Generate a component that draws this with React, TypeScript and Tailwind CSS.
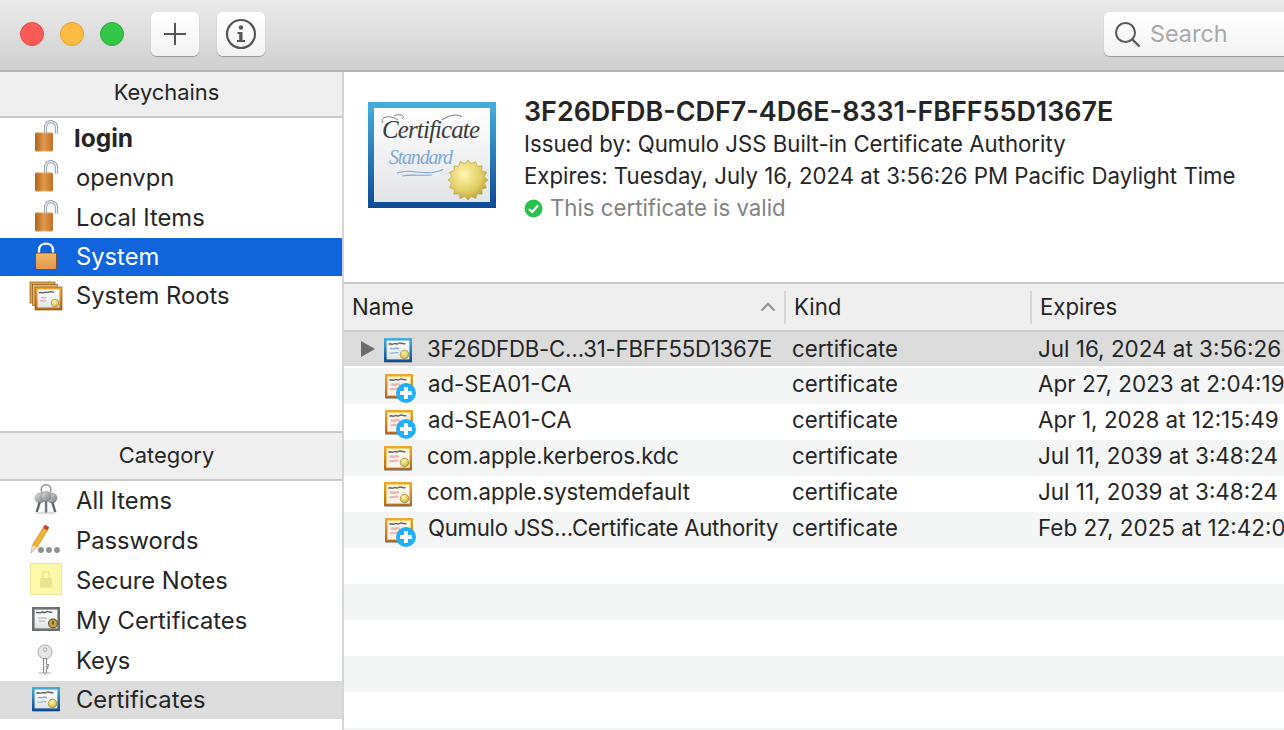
import React from 'react';

// Shared gradients for the little keychain drawings
const Defs = () => (
  <svg width="0" height="0" className="absolute">
    <defs>
      <linearGradient id="brass" x1="0" y1="0" x2="1" y2="0">
        <stop offset="0" stopColor="#b8691f" />
        <stop offset="0.5" stopColor="#f0ab58" />
        <stop offset="1" stopColor="#c97a2e" />
      </linearGradient>
      <linearGradient id="closedBrass" x1="0" y1="0" x2="0" y2="1">
        <stop offset="0" stopColor="#fac674" />
        <stop offset="1" stopColor="#e99a4e" />
      </linearGradient>
      <linearGradient id="blueFrame" x1="0" y1="0" x2="0" y2="1">
        <stop offset="0" stopColor="#45b0dc" />
        <stop offset="1" stopColor="#0e4a96" />
      </linearGradient>
      <linearGradient id="goldFrame" x1="0" y1="0" x2="0" y2="1">
        <stop offset="0" stopColor="#eeaa2e" />
        <stop offset="1" stopColor="#b5671a" />
      </linearGradient>
      <linearGradient id="paper" x1="0" y1="0" x2="0" y2="1">
        <stop offset="0" stopColor="#ffffff" />
        <stop offset="1" stopColor="#e2e4e6" />
      </linearGradient>
      <radialGradient id="seal" cx="0.4" cy="0.35" r="0.75">
        <stop offset="0" stopColor="#fff6b0" />
        <stop offset="0.6" stopColor="#e0cc60" />
        <stop offset="1" stopColor="#a8902c" />
      </radialGradient>
      <linearGradient id="steel" x1="0" y1="0" x2="1" y2="1">
        <stop offset="0" stopColor="#e6e8ea" />
        <stop offset="1" stopColor="#70747a" />
      </linearGradient>
    </defs>
  </svg>
);

const Bands = ({ x, y, w, h, color }: { x: number; y: number; w: number; h: number; color: string }) => (
  <>
    {Array.from({ length: Math.floor(h / 2) }).map((_, i) => (
      <line key={i} x1={x} x2={x + w} y1={y + 1 + i * 2} y2={y + 1 + i * 2} stroke={color} strokeWidth="0.6" opacity="0.55" />
    ))}
  </>
);

const OpenLock = () => (
  <svg width="36" height="36" viewBox="0 0 36 36">
    <path d="M17.500 13V8c0-8.500 11-8.500 11 0v5.500" fill="none" stroke="#8d9aa6" strokeWidth="3.200" />
    <path d="M17.500 13V8c0-8.500 11-8.500 11 0v5.500" fill="none" stroke="#f0f4f8" strokeWidth="1.400" />
    <rect x="7" y="12.500" width="18" height="19" rx="1.500" fill="url(#brass)" />
    <Bands x={7} y={14} w={18} h={16} color="#8e4b12" />
  </svg>
);

const ClosedLock = () => (
  <svg width="36" height="36" viewBox="0 0 36 36">
    <path d="M11 15V11c0-8.500 14-8.500 14 0v4" fill="none" stroke="#f3f6fa" strokeWidth="2.400" />
    <rect x="7.500" y="14" width="21" height="16.500" rx="1.500" fill="url(#closedBrass)" stroke="#7c3e10" strokeWidth="0.8" />
    <Bands x={8} y={15} w={20} h={15} color="#c9792f" />
  </svg>
);

const sealPoints = (cx: number, cy: number, r: number, inner: number, n: number) =>
  Array.from({ length: n * 2 })
    .map((_, i) => {
      const a = (Math.PI * i) / n;
      const d = i % 2 ? inner : r;
      return `${(cx + d * Math.cos(a)).toFixed(2)},${(cy + d * Math.sin(a)).toFixed(2)}`;
    })
    .join(' ');

// 28x24 certificate, frame can be blue or gold
const MiniCert = ({ gold, x = 0, y = 0 }: { gold?: boolean; x?: number; y?: number }) => {
  const ink = gold ? '#eab4b4' : '#7fa8dc';
  return (
    <g transform={`translate(${x} ${y})`}>
      <rect x="0.500" y="1" width="27" height="24" fill="#a8a8a8" />
      <rect x="0" y="0" width="28" height="24" fill={gold ? 'url(#goldFrame)' : 'url(#blueFrame)'} />
      <rect x="2.600" y="2.600" width="22.800" height="18.800" fill={gold ? '#fbf4ea' : 'url(#paper)'} stroke={gold ? '#f8d468' : 'none'} strokeWidth="0.8" />
      <path d="M4.500 6.500c2-2.500 3 1 5-.5s3 1 5-.5 3 1 7 0" fill="none" stroke="#666" strokeWidth="1.500" />
      <path d="M6 11c2-1.500 3 .8 5-.5s2 .5 4 0" fill="none" stroke={ink} strokeWidth={gold ? 2.400 : 1.400} />
      <path d="M5.500 15c3 1 5-1 9-.3" fill="none" stroke={ink} strokeWidth={gold ? 2 : 1} />
      <circle cx="20.500" cy="16.500" r="4.300" fill="url(#seal)" stroke="#8b7a24" strokeWidth="0.6" />
    </g>
  );
};

const CertStack = () => (
  <svg width="36" height="36" viewBox="0 0 36 36">
    <rect x="2" y="4" width="25" height="21" fill="#d8a65a" stroke="#8c5a18" strokeWidth="0.7" />
    <rect x="4.500" y="6.500" width="25" height="21" fill="#e6b86a" stroke="#8c5a18" strokeWidth="0.7" />
    <rect x="7" y="9" width="27" height="23" fill="url(#goldFrame)" stroke="#8c5a18" strokeWidth="0.7" />
    <rect x="9.500" y="11.500" width="22" height="18" fill="url(#paper)" />
    <path d="M11 15c2-2 3 1 5-.5s3 1 5-.5 3 1 5 0" fill="none" stroke="#555" strokeWidth="1.300" />
    <path d="M13 20c2-1.500 3 1 5-.5M12 23c2-1 4 1 6-.5" fill="none" stroke="#d88a9a" strokeWidth="1" />
    <circle cx="27" cy="25" r="3.800" fill="url(#seal)" stroke="#8b7a24" strokeWidth="0.5" />
  </svg>
);

const KeysIcon = () => (
  <svg width="36" height="36" viewBox="0 0 36 36">
    <ellipse cx="18" cy="30" rx="11" ry="1.500" fill="#dcdcdc" />
    <circle cx="18" cy="6.500" r="4.800" fill="none" stroke="#8a8e94" strokeWidth="1.400" />
    <circle cx="12" cy="15" r="5" fill="url(#steel)" stroke="#7a7e84" strokeWidth="0.5" />
    <path d="M10.500 19l-3 10h2.500l3-9.500z" fill="#62666c" />
    <circle cx="24" cy="15" r="5" fill="url(#steel)" stroke="#7a7e84" strokeWidth="0.5" />
    <path d="M25.500 19l3 10H26l-3-9.500z" fill="#62666c" />
    <circle cx="18" cy="13.500" r="5" fill="url(#steel)" stroke="#7a7e84" strokeWidth="0.5" />
    <path d="M16.800 18h2.500v11l-1.200 1-1.300-1z" fill="#74787e" />
  </svg>
);

const PencilIcon = () => (
  <svg width="36" height="36" viewBox="0 0 36 36">
    <path d="M3 30l1.500-8L17 2l4 2.500L9 24.500z" fill="#f2b632" stroke="#a87818" strokeWidth="0.6" />
    <path d="M17 2l4 2.500-1.800 3-4-2.500z" fill="#d63a32" />
    <path d="M3 30l1.500-8L9 24.500z" fill="#f0d8b8" />
    <circle cx="13" cy="27" r="2.900" fill="#8e8e8e" />
    <circle cx="21" cy="27" r="2.900" fill="#8e8e8e" />
    <circle cx="29" cy="27" r="2.900" fill="#8e8e8e" />
  </svg>
);

const NoteIcon = () => (
  <svg width="36" height="36" viewBox="0 0 36 36">
    <rect x="2.500" y="0.500" width="31" height="31" fill="#fdf8a8" stroke="#ece59a" />
    <path d="M14.500 15v-3c0-4.500 7-4.500 7 0v3" fill="none" stroke="#ece690" strokeWidth="1.800" />
    <rect x="12" y="15" width="12" height="9.500" fill="#e9e38e" />
  </svg>
);

const MyCertIcon = () => (
  <svg width="36" height="36" viewBox="0 0 36 36">
    <rect x="4" y="4" width="28" height="24" fill="#6f7072" />
    <rect x="6.600" y="6.600" width="22.800" height="18.800" fill="url(#paper)" />
    <path d="M8 10c2-2 3 1 5-.5s3 1 5-.5 3 1 6 0" fill="none" stroke="#555" strokeWidth="1.400" />
    <path d="M10 15h9M11 18h6" stroke="#aaa" strokeWidth="1" />
    <circle cx="25" cy="20.500" r="4.400" fill="#c9a82a" stroke="#555" strokeWidth="1.100" />
    <path d="M25 18v3.500" stroke="#333" strokeWidth="1.300" />
  </svg>
);

const KeyIcon = () => (
  <svg width="36" height="36" viewBox="0 0 36 36">
    <ellipse cx="17" cy="30" rx="7" ry="1.500" fill="#d4d4d4" />
    <circle cx="17" cy="9" r="7" fill="#e6e6e6" stroke="#8c8c8c" strokeWidth="0.7" />
    <circle cx="17" cy="6.500" r="1.800" fill="#fff" stroke="#777" strokeWidth="0.6" />
    <path d="M15.500 15.500h3v6h2v1.500h-2v1h1.500v1.500h-1.500v4l-1.500 1-1.500-1z" fill="#f4f4f4" stroke="#6c6c6c" strokeWidth="0.8" />
  </svg>
);

const CertificatesIcon = () => (
  <svg width="36" height="36" viewBox="0 0 36 36">
    <MiniCert x={4} y={5} />
  </svg>
);

// Icon used by the table rows
const RowCert = ({ gold, badge }: { gold?: boolean; badge?: boolean }) => (
  <svg width="34" height="30" viewBox="0 0 34 30" className={`overflow-visible ${badge ? 'ml-[1px]' : ''} ${gold ? '' : 'mt-[2px]'}`}>
    <MiniCert gold={gold} x={0} y={3} />
    {badge && (
      <g>
        <circle cx="21" cy="22" r="10" fill="#1fb0fb" />
        <path d="M21 16v12M15 22h12" stroke="#fff" strokeWidth="4" />
      </g>
    )}
  </svg>
);

const BigCert = () => (
  <svg width="128" height="106" viewBox="0 0 128 106" className="shrink-0">
    <rect width="128" height="106" fill="url(#blueFrame)" />
    <rect x="6" y="6" width="116" height="94" fill="url(#paper)" />
    <text x="14" y="36" fontFamily="'Liberation Serif', serif" fontStyle="italic" fontSize="25" fill="#3c3c3c" textLength="98">
      Certificate
    </text>
    <path d="M30 18c-8-6-19-3-15 3M26 14c6-3 12 0 8 3M74 18c8-6 18-6 20-3" fill="none" stroke="#555" strokeWidth="0.8" />
    <text x="21" y="62" fontFamily="'Liberation Serif', serif" fontStyle="italic" fontSize="20" fill="#7fa8dc" textLength="64">
      Standard
    </text>
    <path d="M29 71c12-5 24 2 38-1 3-.5 6-1.500 8-2.500M34 74c10-2 18 0 30-1" fill="none" stroke="#7fa8dc" strokeWidth="1.100" />
    <polygon points={sealPoints(100, 78, 20, 16.500, 16)} fill="url(#seal)" stroke="#b09a3c" strokeWidth="0.6" />
  </svg>
);

const keychains = [
  { label: 'login', icon: <OpenLock />, bold: true },
  { label: 'openvpn', icon: <OpenLock /> },
  { label: 'Local Items', icon: <OpenLock /> },
  { label: 'System', icon: <ClosedLock />, selected: true },
  { label: 'System Roots', icon: <CertStack /> },
];

const categories = [
  { label: 'All Items', icon: <KeysIcon /> },
  { label: 'Passwords', icon: <PencilIcon /> },
  { label: 'Secure Notes', icon: <NoteIcon /> },
  { label: 'My Certificates', icon: <MyCertIcon /> },
  { label: 'Keys', icon: <KeyIcon /> },
  { label: 'Certificates', icon: <CertificatesIcon />, current: true },
];

const rows = [
  { name: '3F26DFDB-C…31-FBFF55D1367E', nameClass: 'tracking-[-0.24px]', expires: 'Jul 16, 2024 at 3:56:26 PM' },
  { name: 'ad-SEA01-CA', nameClass: '', expires: 'Apr 27, 2023 at 2:04:19 PM', gold: true, badge: true },
  { name: 'ad-SEA01-CA', nameClass: '', expires: 'Apr 1, 2028 at 12:15:49 PM', gold: true, badge: true },
  { name: 'com.apple.kerberos.kdc', nameClass: 'tracking-[-0.08px]', expires: 'Jul 11, 2039 at 3:48:24 PM', gold: true },
  { name: 'com.apple.systemdefault', nameClass: 'tracking-[-0.08px]', expires: 'Jul 11, 2039 at 3:48:24 PM', gold: true },
  { name: 'Qumulo JSS…Certificate Authority', nameClass: 'tracking-[-0.29px]', expires: 'Feb 27, 2025 at 12:42:03 PM', gold: true, badge: true },
];

const SidebarRow = ({
  label,
  icon,
  bold,
  selected,
  current,
}: {
  label: string;
  icon: React.ReactNode;
  bold?: boolean;
  selected?: boolean;
  current?: boolean;
}) => (
  <div
    className={`flex items-center pl-[28px] gap-[12px] ${selected || current ? 'h-[38px]' : 'h-10'} ${
      selected ? 'bg-[#1064dc] text-white' : current ? 'bg-[#dcdcdc]' : ''
    }`}
  >
    {icon}
    <span className={bold ? 'font-bold text-[24.500px] -ml-[2px]' : 'text-[23.750px]'}>{label}</span>
  </div>
);

export default function App() {
  return (
    <div className="w-[1284px] h-[730px] overflow-hidden bg-white text-[#252525] text-[22.220px] leading-none font-['Inter','Liberation_Sans',sans-serif] flex flex-col">
      <Defs />

      {/* Toolbar */}
      <div className="h-[72px] shrink-0 flex items-center pb-[2px] bg-linear-to-b from-[#ebebeb] to-[#cfcfcf] border-b-2 border-[#b4b4b4]">
        <div className="flex gap-[16px] ml-[20px]">
          <span className="w-6 h-6 rounded-full bg-[#fb5b57] border border-[#e2463f]" />
          <span className="w-6 h-6 rounded-full bg-[#fdbb40] border border-[#e0a028]" />
          <span className="w-6 h-6 rounded-full bg-[#33c748] border border-[#28ab38]" />
        </div>
        <div className="flex gap-[18px] ml-[27px]">
          <button className="w-12 h-[44px] rounded-[6px] bg-linear-to-b from-white to-[#f2f2f2] shadow-[0_1px_1px_rgba(0,0,0,0.3)] flex items-center justify-center">
            <svg width="24" height="24" viewBox="0 0 24 24">
              <path d="M12 1v22M1 12h22" stroke="#555" strokeWidth="2" />
            </svg>
          </button>
          <button className="w-12 h-[44px] rounded-[6px] bg-linear-to-b from-white to-[#f2f2f2] shadow-[0_1px_1px_rgba(0,0,0,0.3)] flex items-center justify-center">
            <svg width="32" height="32" viewBox="0 0 32 32">
              <circle cx="16" cy="16" r="14" fill="none" stroke="#555" strokeWidth="2.200" />
              <circle cx="16" cy="9.500" r="2.200" fill="#555" />
              <path d="M12.500 14h5v8h2.500v2h-8v-2h2.200v-6h-1.700z" fill="#555" />
            </svg>
          </button>
        </div>
        <div className="ml-[839px] w-[220px] h-[44px] shrink-0 rounded-[6px] bg-linear-to-b from-white to-[#f2f2f2] shadow-[0_1px_1px_rgba(0,0,0,0.3)] flex items-center pl-[10px] gap-[9px] text-[#a9a9a9] text-[23.400px]">
          <svg width="27" height="27" viewBox="0 0 27 27">
            <circle cx="11.500" cy="11.500" r="9.500" fill="none" stroke="#555" strokeWidth="2" />
            <path d="M18.500 18.500l7 7" stroke="#555" strokeWidth="2.200" />
          </svg>
          Search
        </div>
      </div>

      <div className="flex flex-1 min-h-0">
        {/* Sidebar */}
        <div className="w-[344px] shrink-0 border-r-2 border-[#d4d4d4] flex flex-col">
          <div className="h-[46px] shrink-0 pb-[3px] pr-[9px] flex items-center justify-center bg-[#efefef] border-b-2 border-[#c9c9c9] text-[21.900px]">
            Keychains
          </div>
          <div className="h-[315px] shrink-0">
            {keychains.map((k) => (
              <SidebarRow key={k.label} {...k} />
            ))}
          </div>
          <div className="h-[50px] shrink-0 pb-[1px] pr-[9px] -mt-[2px] flex items-center justify-center bg-[#efefef] border-y-2 border-[#c9c9c9] text-[21.900px]">
            Category
          </div>
          <div>
            {categories.map((c) => (
              <SidebarRow key={c.label} {...c} />
            ))}
          </div>
        </div>

        {/* Main */}
        <div className="flex-1 min-w-0 flex flex-col">
          <div className="h-[210px] shrink-0 flex pl-[24px] pt-[30px] gap-[28px]">
            <BigCert />
            <div className="flex flex-col -mt-[3px] gap-[9px] whitespace-nowrap">
              <div className="font-semibold text-[26.900px] h-[24px] mb-[1px] flex items-center">3F26DFDB-CDF7-4D6E-8331-FBFF55D1367E</div>
              <div className="h-[23px] flex items-center">Issued by: Qumulo JSS Built-in Certificate Authority</div>
              <div className="h-[23px] flex items-center">Expires: Tuesday, July 16, 2024 at 3:56:26 PM Pacific Daylight Time</div>
              <div className="h-[23px] flex items-center gap-[7px] text-[#828282]">
                <svg width="19" height="19" viewBox="0 0 19 19">
                  <circle cx="9.500" cy="9.500" r="9" fill="#27c24c" />
                  <path d="M5 10l3.200 3L14 6.500" fill="none" stroke="#fff" strokeWidth="2.200" />
                </svg>
                This certificate is valid
              </div>
            </div>
          </div>

          {/* Table header */}
          <div className="h-[50px] shrink-0 flex items-center bg-[#efefef] border-y-2 border-[#c9c9c9] whitespace-nowrap">
            <div className="w-[442px] shrink-0 h-[33px] flex items-center justify-between pl-[8px] pr-[8px] border-r-2 border-[#d6d6d6]">
              Name
              <svg width="16" height="10" viewBox="0 0 16 10">
                <path d="M1.500 8.500L8 2l6.500 6.500" fill="none" stroke="#9a9a9a" strokeWidth="2.400" />
              </svg>
            </div>
            <div className="w-[246px] shrink-0 h-[33px] flex items-center pl-[8px] border-r-2 border-[#d6d6d6]">Kind</div>
            <div className="pl-[8px]">Expires</div>
          </div>

          {/* Rows: the selected one is followed by a 2px white gap, text sits above the stripe's middle */}
          <div className="flex-1 overflow-hidden whitespace-nowrap">
            {rows.map((r, i) => (
              <div
                key={i}
                className={`flex items-center ${i === 0 ? 'h-[34px] mb-[2px] bg-[#dbdbdb]' : 'h-9'} ${i % 2 === 1 ? 'bg-[#f4f5f5]' : ''}`}
              >
                <div className="w-[448px] shrink-0 flex items-center">
                  <div className="w-[40px] shrink-0 flex justify-end pr-[8px]">
                    {i === 0 && (
                      <svg width="16" height="18" viewBox="0 0 16 18">
                        <path d="M1 1l14 8-14 8z" fill="#6c6c6c" />
                      </svg>
                    )}
                  </div>
                  <RowCert gold={r.gold} badge={r.badge} />
                  <span className={`ml-[9px] ${i === 0 ? '' : 'pb-[4px]'} ${r.nameClass}`}>{r.name}</span>
                </div>
                <div className={`w-[246px] shrink-0 ${i === 0 ? '' : 'pb-[4px]'}`}>certificate</div>
                <div className={`text-[22.450px] ${i === 0 ? '' : 'pb-[4px]'}`}>{r.expires}</div>
              </div>
            ))}
            {[0, 1, 2, 3, 4, 5].map((i) => (
              <div key={i} className={`h-9 ${i % 2 === 1 ? 'bg-[#f4f5f5]' : ''}`} />
            ))}
          </div>
        </div>
      </div>
    </div>
  );
}
